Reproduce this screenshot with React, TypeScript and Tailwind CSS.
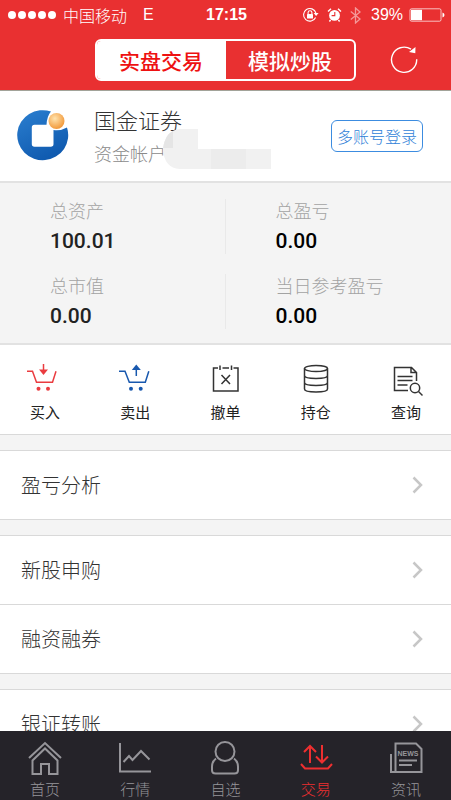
import React from 'react';

const CJK = "font-['Noto_Sans_CJK_SC',sans-serif]";

const strokeProps = {
    fill: 'none',
    stroke: 'currentColor',
    strokeWidth: 1.5,
};

const StatusBar: React.FC = () => (
    <div className="flex h-[30px] items-center px-[6px] text-base leading-5">
        <div className="flex flex-1 items-center pl-[2px]">
            <div className="flex gap-[2px]">
                {[0, 1, 2, 3, 4].map((dot) => (
                    <span key={dot} className="h-2 w-2 rounded-full bg-white" />
                ))}
            </div>
            <span className="ml-[7px] font-light">中国移动</span>
            <span className="ml-4 font-['Liberation_Sans',sans-serif]">E</span>
        </div>
        <span className="font-['Liberation_Sans',sans-serif] font-bold">17:15</span>
        <div className="flex flex-1 items-center justify-end font-['Liberation_Sans',sans-serif]">
            <svg width="17" height="16" viewBox="0 0 17 16">
                <path d="M13.6 10.4A6.3 6.3 0 1 1 13.9 6" fill="none" stroke="white" strokeWidth="1.1" />
                <path d="M11.6 6h5l-2.5 3z" fill="white" />
                <rect x="5" y="7" width="6" height="4.6" rx=".6" fill="white" />
                <path d="M6.1 7V5.6a1.9 1.9 0 0 1 3.8 0V7" fill="none" stroke="white" strokeWidth="1.1" />
            </svg>
            <svg className="ml-2" width="15" height="16" viewBox="0 0 15 16">
                <circle cx="7.5" cy="8.4" r="5.4" fill="white" />
                <path d="M1 4.5 4 1.8M14 4.5l-3-2.7M3.6 13l-1.2 1.5M11.4 13l1.2 1.5" stroke="white" strokeWidth="1.4" />
                <path d="M7.8 5v3.6H4.6" fill="none" stroke="#e93031" strokeWidth="1.1" />
            </svg>
            <svg className="ml-2 opacity-50" width="11" height="17" viewBox="0 0 11 17">
                <path d="M.8 4.6 10 12l-4.5 4V1L10 5 .8 12.4" fill="none" stroke="white" strokeWidth="1.3" />
            </svg>
            <span className="ml-[10px]">39%</span>
            <svg className="ml-[6px]" width="36" height="14" viewBox="0 0 36 14">
                <rect x="1" y=".8" width="31" height="12.4" rx="1.5" fill="none" stroke="white" strokeOpacity=".7" />
                <rect x="2" y="1.8" width="11" height="10.4" fill="white" />
                <path d="M33.5 4.5q2 .6 2 2.5t-2 2.5z" fill="white" />
            </svg>
        </div>
    </div>
);

const Header: React.FC = () => (
    <header className="shrink-0 border-b border-[#a2a399] bg-[#e93031] text-white">
        <StatusBar />
        <div className="flex h-[60px] items-center">
            <div className="flex-1" />
            <div className="flex h-[42px] w-[58%] overflow-hidden rounded-md border-2 border-white text-[21px] font-medium leading-6">
                <button className="flex-1 bg-white text-[#ee1111]">实盘交易</button>
                <button className="flex-1">模拟炒股</button>
            </div>
            <div className="flex flex-1 justify-center">
                <button aria-label="刷新">
                    <svg width="28" height="28" viewBox="0 0 28 28">
                        <path d="M26.7 13.3A12.6 12.6 0 1 1 21 3.2" fill="none" stroke="white" strokeWidth="1.4" />
                        <path d="m25.5 1-.2 6.200-6.300-1.200z" fill="white" />
                    </svg>
                </button>
            </div>
        </div>
    </header>
);

const BrokerLogo: React.FC = () => (
    <svg className="shrink-0" width="54" height="52" viewBox="0 0 54 52">
        <defs>
            <linearGradient id="ring" x1="0" y1="0" x2=".5" y2="1">
                <stop offset="0" stopColor="#2b7fd0" />
                <stop offset="1" stopColor="#105bb0" />
            </linearGradient>
            <radialGradient id="sun" cx=".4" cy=".35" r=".65">
                <stop offset="0" stopColor="#ffe3ae" />
                <stop offset="1" stopColor="#f29a3c" />
            </radialGradient>
        </defs>
        <path
            d="M35 1.500A25.500 25 0 1 0 51 17.500Q45 21 37.500 20V34q0 2.700-2.700 2.700H18.500q-2.700 0-2.700-2.700V17.500q0-2.700 2.700-2.700H30.500Q31 6 35 1.500Z"
            fill="url(#ring)"
        />
        <circle cx="40.500" cy="11" r="8" fill="url(#sun)" />
    </svg>
);

const Account: React.FC = () => (
    <section className="flex h-[92px] items-center border-b-2 border-[#e2e2e2] pl-4 pr-7">
        <BrokerLogo />
        <div className="relative ml-6 flex-1 text-[#333]">
            <h1 className="text-[22px] font-light leading-8">国金证券</h1>
            <p className="mt-[2px] text-lg font-light leading-8 text-[#8a8a8a]">资金帐户</p>
            {/* masked account number */}
            <svg className="absolute left-[69px] top-[26px]" width="108" height="40" viewBox="0 0 108 40">
                <path d="M0 20Q2 1 17 0h18v20h73v20H17Q1 39 0 20Z" fill="#f1f1f1" />
                <path d="M10 2v17H0Q2 6 10 2Z" fill="#e5e5e5" />
                <path d="M48 20h35v20H48z" fill="#ececec" />
            </svg>
        </div>
        <button className="h-8 rounded-md border border-[#3c8ce0] px-[5px] text-base font-light leading-6 text-[#2f7fd8]">
            多账号登录
        </button>
    </section>
);

const stats = [
    { label: '总资产', value: '100.01', color: 'text-[#222]' },
    { label: '总盈亏', value: '0.00', color: 'text-black' },
    { label: '总市值', value: '0.00', color: 'text-[#222]' },
    { label: '当日参考盈亏', value: '0.00', color: 'text-black' },
];

const Stats: React.FC = () => (
    <dl className="grid grid-cols-2 gap-y-5 border-b-2 border-[#e2e2e2] bg-[#f4f4f4] pb-[14px] pt-4">
        {stats.map((stat) => (
            <div key={stat.label} className="border-r border-[#e9e9e9] pl-[50px] even:border-0">
                <dt className="text-lg font-light leading-[22px] text-[#a3a3a3]">{stat.label}</dt>
                <dd className={`mt-[7px] font-[Roboto,sans-serif] text-[21px] font-medium leading-[26px] ${stat.color}`}>
                    {stat.value}
                </dd>
            </div>
        ))}
    </dl>
);

const actions = [
    {
        label: '买入',
        color: 'text-[#ea3c40]',
        icon: (
            <>
                <path {...strokeProps} d="M0 9.300h5.500l4 11h16l3.500-11M16.500 2v7" />
                <path d="M12 7.500h9l-4.500 5.500z" fill="currentColor" />
                <circle cx="11.500" cy="26.700" r="2" fill="currentColor" />
                <circle cx="21" cy="26.700" r="2" fill="currentColor" />
            </>
        ),
    },
    {
        label: '卖出',
        color: 'text-[#1858ae]',
        icon: (
            <>
                <path {...strokeProps} d="M2 9.300h6l4.300 11h16l3.500-11M19.300 7v7" />
                <path d="M14.800 8h9L19.300 2.500z" fill="currentColor" />
                <circle cx="14" cy="26.700" r="2" fill="currentColor" />
                <circle cx="23.700" cy="26.700" r="2" fill="currentColor" />
            </>
        ),
    },
    {
        label: '撤单',
        color: 'text-[#333]',
        icon: <path {...strokeProps} d="M11 6H6.500v23h24.500V6h-4.500M15.500 6h6.500M13 3.500v4.500M24.500 3.500v4.500M14.500 13l8.500 9M23 13l-8.500 9" />,
    },
    {
        label: '持仓',
        color: 'text-[#333]',
        icon: (
            <>
                <ellipse {...strokeProps} cx="18" cy="6.500" rx="11.500" ry="3" />
                <path {...strokeProps} d="M6.500 6.500V27c0 4 23 4 23 0V6.500M6.500 13.500c0 4 23 4 23 0M6.500 20.500c0 4 23 4 23 0" />
            </>
        ),
    },
    {
        label: '查询',
        color: 'text-[#333]',
        icon: (
            <>
                <path {...strokeProps} d="M20 28.500H6.500V5.500h17l5 5V19M23 5.500v5H28.500M9.500 14.500h15M9.500 18.500h15M9.500 23h10" />
                <circle {...strokeProps} cx="27" cy="26" r="4.700" />
                <path {...strokeProps} d="m30.500 29.500 4 4" />
            </>
        ),
    },
];

const Actions: React.FC = () => (
    <section className="grid grid-cols-5 border-b border-[#d9d9d9] pb-[11px] pt-[17px]">
        {actions.map((action) => (
            <button key={action.label} className="flex flex-col items-center">
                <svg className={action.color} width="36" height="36" viewBox="0 0 36 36">
                    {action.icon}
                </svg>
                <span className="mt-[3px] text-[15px] leading-[22px] text-[#222]">{action.label}</span>
            </button>
        ))}
    </section>
);

const menuGroups = [['盈亏分析'], ['新股申购', '融资融券'], ['银证转账']];

const Menu: React.FC = () => (
    <>
        {menuGroups.map((group) => (
            <ul key={group[0]} className="mt-[15px] divide-y divide-[#d9d9d9] border-y border-[#d9d9d9] bg-white">
                {group.map((item) => (
                    <li key={item}>
                        <a href="#" className="flex h-[68px] items-center justify-between pl-[21px] pr-[27px] text-xl font-light text-[#333]">
                            {item}
                            <svg width="13" height="18" viewBox="0 0 13 18">
                                <path d="m2.500 1.500 7.500 7.500-7.500 7.500" fill="none" stroke="#c7c7c7" strokeWidth="2.500" />
                            </svg>
                        </a>
                    </li>
                ))}
            </ul>
        ))}
    </>
);

const tabs = [
    {
        label: '首页',
        icon: (
            <>
                <path d="M2 18 18 3l16 15" />
                <path d="M5.500 20.500V34H14V24h8v10h8.500V20.500L18 8.500z" />
            </>
        ),
    },
    {
        label: '行情',
        icon: (
            <>
                <path d="M3 3v28.500h31" />
                <path d="m6.500 22 5.500-6 3.500 4L24 11l8.500 8.500" />
            </>
        ),
    },
    {
        label: '自选',
        icon: (
            <>
                <circle cx="18" cy="11.500" r="9.500" />
                <path d="M9 18.500q-4 3-4 8V30q0 3.500 3.500 3.500h19q3.500 0 3.500-3.500v-3.500q0-5-4-8" />
            </>
        ),
    },
    {
        label: '交易',
        active: true,
        icon: (
            <>
                <path d="M12 23V6M6 12l6-6 6 6M24 5v17M18 16.500l6 6 6-6" />
                <path d="m3 24 4 4.500h23l4-4.500" />
            </>
        ),
    },
    {
        label: '资讯',
        icon: (
            <>
                <path d="M7.500 32V3.500H28l5.500 5.500v23H3V14" />
                <path d="M11 20.500h18M11 25h13" />
                <text x="9.500" y="16" fontSize="7" fontWeight="700" fontFamily="Liberation Sans, sans-serif" fill="currentColor" stroke="none">
                    NEWS
                </text>
            </>
        ),
    },
];

const TabBar: React.FC = () => (
    <nav className="grid shrink-0 grid-cols-5 bg-[#252329] pb-[2px] pt-[9px]">
        {tabs.map((tab) => (
            <a
                key={tab.label}
                href="#"
                className={`flex flex-col items-center ${tab.active ? 'text-[#ee2f30]' : 'text-[#96959a]'}`}
            >
                <svg width="36" height="36" viewBox="0 0 36 36" fill="none" stroke="currentColor" strokeWidth="2">
                    {tab.icon}
                </svg>
                <span className="mt-1 text-[15px] font-light leading-[18px]">{tab.label}</span>
            </a>
        ))}
    </nav>
);

const App: React.FC = () => {
    return (
        <div className={`flex h-screen flex-col ${CJK}`}>
            <Header />
            <main className="min-h-0 flex-1 overflow-y-auto bg-[#f4f4f4] [scrollbar-width:none]">
                <div className="bg-white">
                    <Account />
                    <Stats />
                    <Actions />
                </div>
                <Menu />
            </main>
            <TabBar />
        </div>
    );
};

export default App;
